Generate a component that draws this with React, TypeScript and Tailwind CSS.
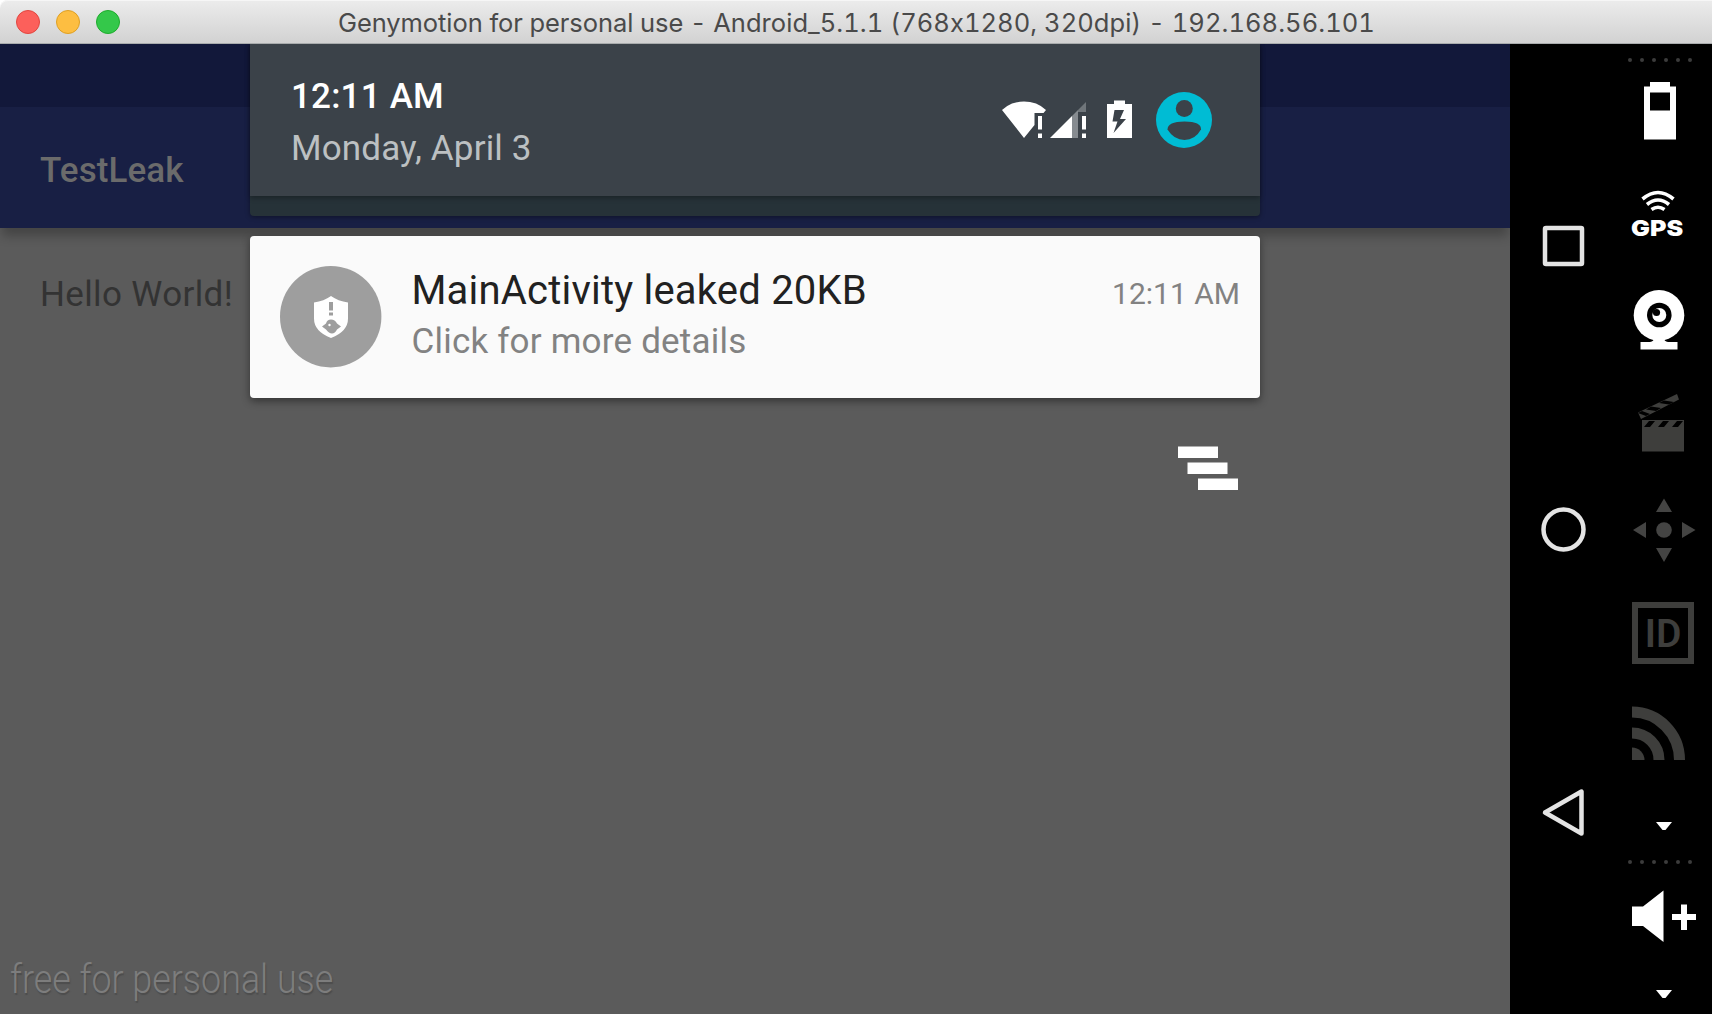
import type { ReactNode } from "react";

function TitleBar() {
  return (
    <header className="flex h-11 shrink-0 items-center rounded-tl-lg border-b border-[#a9acad] bg-linear-to-b from-[#ececec] to-[#d2d2d2] pl-4 shadow-[inset_0_1px_0_#f6f6f6]">
      <div className="flex w-[322px] shrink-0 gap-4">
        <i className="size-6 rounded-full border border-[#e2463f] bg-[#fc605b]" />
        <i className="size-6 rounded-full border border-[#dfa023] bg-[#fdbe41]" />
        <i className="size-6 rounded-full border border-[#1eac2c] bg-[#34c84a]" />
      </div>
      <h1 className="pt-0.5 font-[Inter,sans-serif] text-[25.5px] leading-[42px] tracking-[-0.08px] whitespace-nowrap text-[#4a4a4a] tabular-nums">
        Genymotion for personal use - <span className="tracking-[0.05px]">Android_5.1.1 (768x1280, 320dpi) - 192.168.56.101</span>
      </h1>
    </header>
  );
}

function StatusIcons() {
  return (
    <svg width="220" height="64" viewBox="996 88 220 64" className="shrink-0">
      <path fill="#fff" d="M1002 110q4-4 10-6.500q12-4 24 0q6 2.500 10 6.500l-2.500 3h-9v12l-10.500 13z" />
      <path fill="#fff" d="M1038 116h4v13.500h-4zM1038 133.500h4v4.500h-4z" />
      <path fill="#fff" d="M1050 138l22-22v22z" />
      <path fill="#868b90" d="M1072 116l6-6v28h-6z" />
      <path fill="#70767b" d="M1078 110l8-8v10h-8z" />
      <path fill="#fff" d="M1082 116h4v13.500h-4zM1082 133.500h4v4.500h-4z" />
      <path fill="#fff" fillRule="evenodd" d="M1114 100.500h11v3.500h7v34h-25v-34h7zM1114.500 110l-2 11.500h5l-4 11.500l12.500-14h-6l4-9z" />
      <circle cx="1184" cy="120" r="28" fill="#00bcd4" />
      <circle cx="1184.300" cy="108.600" r="8.500" fill="#3b4249" />
      <path fill="#3b4249" d="M1167.500 129.500q0-8 17-8t16.500 8q-6 10.500-16.500 10.500t-17-10.500z" />
    </svg>
  );
}

function QuickHeader() {
  return (
    <section className="h-[172px] shrink-0 rounded-b-[4px] bg-[#263238] shadow-[0_1px_5px_rgba(0,0,0,0.4)]">
      <div className="flex h-[152px] items-start justify-between bg-[#3b4249] pr-11 pl-[41px] shadow-[0_2px_5px_rgba(0,0,0,0.3)]">
        <div className="pt-[27px] whitespace-nowrap">
          <p className="h-[52px] text-[35px] leading-[52px] font-medium tracking-[0.2px] text-white">12:11 AM</p>
          <p className="h-[52px] text-[35px] leading-[52px] tracking-[0.15px] text-[#bcc0c2]">Monday, April 3</p>
        </div>
        <div className="pt-11">
          <StatusIcons />
        </div>
      </div>
    </section>
  );
}

function LeakIcon() {
  return (
    <svg width="102" height="102" viewBox="280 266 102 102" className="shrink-0">
      <circle cx="330.700" cy="316.700" r="50.700" fill="#9e9e9e" />
      <path fill="#fff" d="M331 296q7 5 17 6.500v16q0 13-17 19.500q-17-6.500-17-19.500v-16q10-1.500 17-6.500z" />
      <path fill="#9e9e9e" d="M329 302h4v8.500h-4zM329 312.500h4v3h-4zM322 326.500l4-3q1-4 5-4t6 4l4 3l-4 3q-2 4-5 4t-6-4z" />
      <circle cx="329.500" cy="325" r="1.200" fill="#fff" />
    </svg>
  );
}

function NotificationCard() {
  return (
    <article className="mt-5 flex h-[162px] shrink-0 items-start rounded-[4px] bg-[#fafafa] pt-[30px] pr-5 pl-[30px] shadow-[0_3px_8px_rgba(0,0,0,0.45)]">
      <LeakIcon />
      <div className="ml-[29.5px] grow whitespace-nowrap">
        <h2 className="h-[51px] text-[40px] leading-[50px] tracking-[0.2px] text-[#212121]">MainActivity leaked 20KB</h2>
        <p className="h-[50px] text-[35px] leading-[50px] tracking-[0.2px] text-[#828282]">Click for more details</p>
      </div>
      <time className="text-[30px] leading-[56px] whitespace-nowrap text-[#828282]">12:11 AM</time>
    </article>
  );
}

function DeviceScreen() {
  return (
    <main className="relative flex w-[1510px] shrink-0 flex-col bg-[#5b5b5b]">
      <div className="h-[63px] shrink-0 bg-[#12183a]" />
      <div className="flex h-[121px] shrink-0 items-center bg-[#181f44] pt-[6px] pl-10 shadow-[0_10px_10px_-2px_rgba(0,0,0,0.25)]">
        <span className="text-[35px] leading-[40px] font-medium tracking-[0.1px] text-[#6b6b6b]">TestLeak</span>
      </div>
      <p className="mt-[47px] ml-10 text-[35px] leading-[40px] tracking-[0.35px] text-[#333]">Hello World!</p>
      <p className="mt-auto mb-[11px] ml-[10px] origin-left scale-x-[0.875] text-[41px] leading-[48px] font-light text-[#7d7d7d] [text-shadow:1px_2px_1px_#4d4d4d]">
        free for personal use
      </p>
      <div className="absolute top-0 left-[250px] flex w-[1010px] flex-col">
        <QuickHeader />
        <NotificationCard />
        <svg width="60" height="44" viewBox="1178 446 60 44" className="mt-12 mr-[22px] self-end">
          <path fill="#fff" d="M1178 446.500h40v11.500h-40zM1187.500 462.500h40v11.500h-40zM1198 478.500h40v11.500h-40z" />
        </svg>
      </div>
    </main>
  );
}

function NavKeys() {
  return (
    <nav className="flex w-[106px] flex-col items-center pt-[179px] pl-1">
      <svg width="50" height="46" viewBox="0 0 50 46" fill="none" stroke="#e4e4e4" strokeWidth="4.500">
        <rect x="5" y="5" width="37" height="36" rx="1" />
      </svg>
      <svg width="50" height="48" viewBox="0 0 50 48" fill="none" stroke="#e4e4e4" strokeWidth="4.500" className="mt-[236px]">
        <circle cx="23.500" cy="24.500" r="20" />
      </svg>
      <svg width="50" height="52" viewBox="0 0 50 52" fill="none" stroke="#e4e4e4" strokeWidth="4.500" strokeLinejoin="round" className="mt-[234px]">
        <path d="M5 25.500L41.500 4.500v42z" />
      </svg>
    </nav>
  );
}

function Slot({ top, height, children }: { top: number; height: number; children: ReactNode }) {
  return (
    <svg width="96" height={height} viewBox={`1616 ${top} 96 ${height}`} className="shrink-0">
      {children}
    </svg>
  );
}

function Dots({ y }: { y: number }) {
  return (
    <g fill="#3c3c3c">
      {[1630, 1642, 1654, 1666, 1678, 1690].map((x) => (
        <circle key={x} cx={x} cy={y} r="2" />
      ))}
    </g>
  );
}

function ToolBar() {
  return (
    <aside className="flex w-24 flex-col text-white">
      <Slot top={44} height={30}>
        <Dots y={60} />
      </Slot>
      <Slot top={74} height={96}>
        <path fill="#fff" fillRule="evenodd" d="M1650 82h20v4.500h6v53h-32v-53h6zM1650 92.500h20v18h-20z" />
      </Slot>
      <Slot top={170} height={48}>
        <g fill="none" stroke="#fff" strokeWidth="3.600">
          <path d="M1642.500 199q15.500-13 31 0" />
          <path d="M1647 204.500q11-9 22 0" />
          <path d="M1651.500 209.500q6.500-4.500 13 0" />
        </g>
      </Slot>
      <span className="-mt-1 ml-[15px] h-7 w-[60px] origin-left scale-x-[1.14] font-[Inter,sans-serif] text-[22px] leading-7 font-black">GPS</span>
      <Slot top={242} height={128}>
        <circle cx="1659" cy="315.300" r="25.300" fill="#fff" />
        <path fill="#fff" d="M1654 338h10q0 3.500 4 4h9.500v7.500h-37v-7.500h9.500q4-0.500 4-4z" />
        <circle cx="1659.300" cy="315" r="12.300" fill="#000" />
        <circle cx="1659.300" cy="315" r="7" fill="#fff" />
        <circle cx="1656.500" cy="312.500" r="3.600" fill="#000" />
      </Slot>
      <Slot top={370} height={110}>
        <path fill="#3e3e3c" d="M1642 420h42v31.500h-42z" />
        <path fill="#000" d="M1644 427l5-6h6l-5 6zM1658 427l5-6h6l-5 6zM1672 427l5-6h6l-5 6z" />
        <path fill="#3e3e3c" d="M1638 412.500l39-18.500l2 5.500l-38 19.500z" />
        <path fill="#000" d="M1642 411l8 3l-4 2l-8-3zM1651 406.500l10 1.500l-5 3l-10-1.500zM1664 400.500l10 1.500l-5 2.500l-10-1.500z" />
      </Slot>
      <Slot top={480} height={100}>
        <g fill="#444443">
          <circle cx="1664" cy="530" r="7.800" />
          <path d="M1664 498.500l8 13.500h-16zM1664 562l8-14h-16zM1633 530l13-8v16zM1695.500 530l-13.500-8v16z" />
        </g>
      </Slot>
      <div className="mt-[22px] ml-4 flex size-[62px] shrink-0 items-center justify-center border-6 border-[#3e3e3c] pt-[3px] font-[Roboto,sans-serif] text-[39px] leading-none font-semibold text-[#3e3e3c]">
        ID
      </div>
      <Slot top={664} height={136}>
        <path fill="#3e3e3c" d="M1632 747.500a12.500 12.500 0 0 1 12.500 12.500h-12.500z" />
        <g fill="none" stroke="#3e3e3c" strokeWidth="11">
          <path d="M1632 733a27 27 0 0 1 27 27" />
          <path d="M1632 712a47.500 48 0 0 1 47.500 48" />
        </g>
      </Slot>
      <Slot top={800} height={80}>
        <path fill="#fff" d="M1656 822h16l-6.500 8h-3z" />
        <Dots y={862} />
      </Slot>
      <Slot top={880} height={134}>
        <path fill="#fff" d="M1632 906.500h11l20.500-16v51.500l-20.500-16h-11zM1681 904.500h6v9.500h9v6h-9v10h-6v-10h-9v-6h9z" />
        <path fill="#fff" d="M1656 990h16l-6.500 8h-3z" />
      </Slot>
    </aside>
  );
}

export default function App() {
  return (
    <div className="flex h-[1014px] w-[1712px] flex-col overflow-hidden bg-white font-[Roboto,sans-serif]">
      <TitleBar />
      <div className="flex min-h-0 grow overflow-hidden bg-black">
        <DeviceScreen />
        <NavKeys />
        <ToolBar />
      </div>
    </div>
  );
}
